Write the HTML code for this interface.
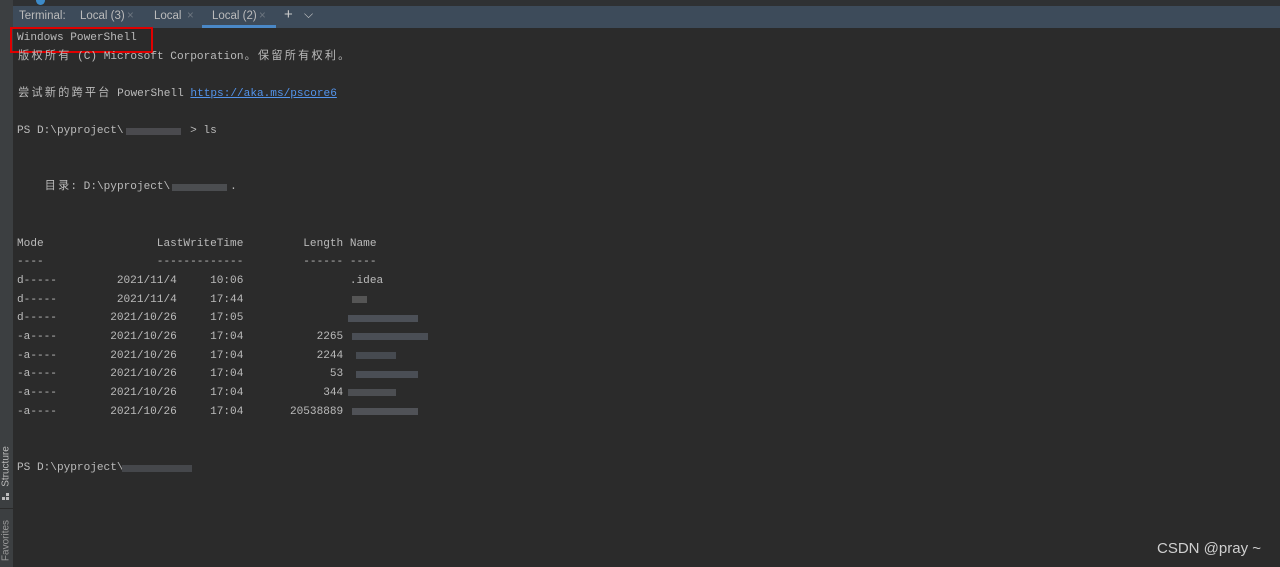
<!DOCTYPE html>
<html><head><meta charset="utf-8"><style>
body{margin:0;width:1280px;height:567px;background:#2b2b2b;overflow:hidden;position:relative;font-family:"Liberation Mono","Noto Sans CJK SC",monospace;}
.l{position:absolute;left:17px;font-size:11.1px;color:#bbbbbb;white-space:pre;line-height:14px;}
.c{display:inline-block;width:13.36px;text-align:center;}
.side{position:absolute;left:0;top:0;width:13px;height:567px;background:#3c3f41;}
.tabs{position:absolute;left:13px;top:6px;width:1267px;height:22px;background:#3d4b5a;font-family:"Liberation Sans",sans-serif;font-size:11.5px;color:#bbbbbb;}
.tabs span{position:absolute;top:4px;}
.x{color:#6e7780;}
.b{position:absolute;height:7px;}
</style></head><body>
<div style="position:absolute;left:13px;top:0;width:1267px;height:6px;background:#2f3133"></div>
<div style="position:absolute;left:36px;top:-4px;width:9px;height:9px;border-radius:50%;background:#3d8bc9"></div>
<div class="side"></div>
<div style="position:absolute;left:0;top:508px;width:13px;height:1px;background:#2b2b2b"></div>
<div style="position:absolute;left:-19px;top:461px;transform:rotate(-90deg);font-family:'Liberation Sans',sans-serif;font-size:10px;color:#bbbbbb;width:50px;text-align:center">Structure</div>
<div style="position:absolute;left:2px;top:497px;width:3px;height:3px;background:#bbb"></div><div style="position:absolute;left:6px;top:497px;width:3px;height:3px;background:#bbb"></div><div style="position:absolute;left:6px;top:493px;width:3px;height:3px;background:#bbb"></div>
<div style="position:absolute;left:-19px;top:535px;transform:rotate(-90deg);font-family:'Liberation Sans',sans-serif;font-size:10px;color:#999;width:50px;text-align:center">Favorites</div>
<div class="tabs">
<span style="left:6px">Terminal:</span>
<span style="left:67px">Local (3)</span><span class="x" style="left:114px">×</span>
<span style="left:141px">Local</span><span class="x" style="left:174px">×</span>
<span style="left:199px">Local (2)</span><span class="x" style="left:246px">×</span>
<span style="left:271px;font-size:15px;top:0px;color:#ccc">+</span>
<span style="left:291px;top:1px;font-size:12px;color:#ccc">⌵</span>
<div style="position:absolute;left:189px;top:19px;width:74px;height:3px;background:#4a88c7"></div>
</div>
<div style="position:absolute;left:10px;top:27px;width:139px;height:22px;border:2px solid #e00000"></div>
<div class="l" style="top:31px">Windows PowerShell</div>
<div class="l" style="top:50px"><span class="c">版</span><span class="c">权</span><span class="c">所</span><span class="c">有</span> (C) Microsoft Corporation<span class="c">。</span><span class="c">保</span><span class="c">留</span><span class="c">所</span><span class="c">有</span><span class="c">权</span><span class="c">利</span><span class="c">。</span></div>
<div class="l" style="top:87px"><span class="c">尝</span><span class="c">试</span><span class="c">新</span><span class="c">的</span><span class="c">跨</span><span class="c">平</span><span class="c">台</span> PowerShell <span style="color:#5394ec;text-decoration:underline">https://aka.ms/pscore6</span></div>
<div class="l" style="top:124px">PS D:\pyproject\          &gt; ls</div>
<div class="b" style="left:126px;top:128px;width:55px;background:#4a4a4e"></div>
<div class="l" style="top:180px">    <span class="c">目</span><span class="c">录</span>: D:\pyproject\         .</div>
<div class="b" style="left:172px;top:184px;width:55px;background:#4b4d50"></div>
<div class="l" style="top:237px">Mode                 LastWriteTime         Length Name</div>
<div class="l" style="top:255px">----                 -------------         ------ ----</div>
<div class="l" style="top:274px">d-----         2021/11/4     10:06                .idea</div>
<div class="l" style="top:293px">d-----         2021/11/4     17:44</div>
<div class="l" style="top:311px">d-----        2021/10/26     17:05</div>
<div class="l" style="top:330px">-a----        2021/10/26     17:04           2265</div>
<div class="l" style="top:349px">-a----        2021/10/26     17:04           2244</div>
<div class="l" style="top:367px">-a----        2021/10/26     17:04             53</div>
<div class="l" style="top:386px">-a----        2021/10/26     17:04            344</div>
<div class="l" style="top:405px">-a----        2021/10/26     17:04       20538889</div>
<div class="b" style="left:352px;top:296px;width:15px;background:#555"></div>
<div class="b" style="left:348px;top:315px;width:70px;background:#4c5057"></div>
<div class="b" style="left:352px;top:333px;width:76px;background:#4a4e55"></div>
<div class="b" style="left:356px;top:352px;width:40px;background:#464a50"></div>
<div class="b" style="left:356px;top:371px;width:62px;background:#4a4e55"></div>
<div class="b" style="left:348px;top:389px;width:48px;background:#4c4e52"></div>
<div class="b" style="left:352px;top:408px;width:66px;background:#505257"></div>
<div class="l" style="top:461px">PS D:\pyproject\</div>
<div class="b" style="left:122px;top:465px;width:70px;background:#45474b"></div>
<div style="position:absolute;left:1157px;top:540px;font-family:'Liberation Sans',sans-serif;font-size:15px;color:#cfcfcf">CSDN @pray ~</div>
</body></html>
